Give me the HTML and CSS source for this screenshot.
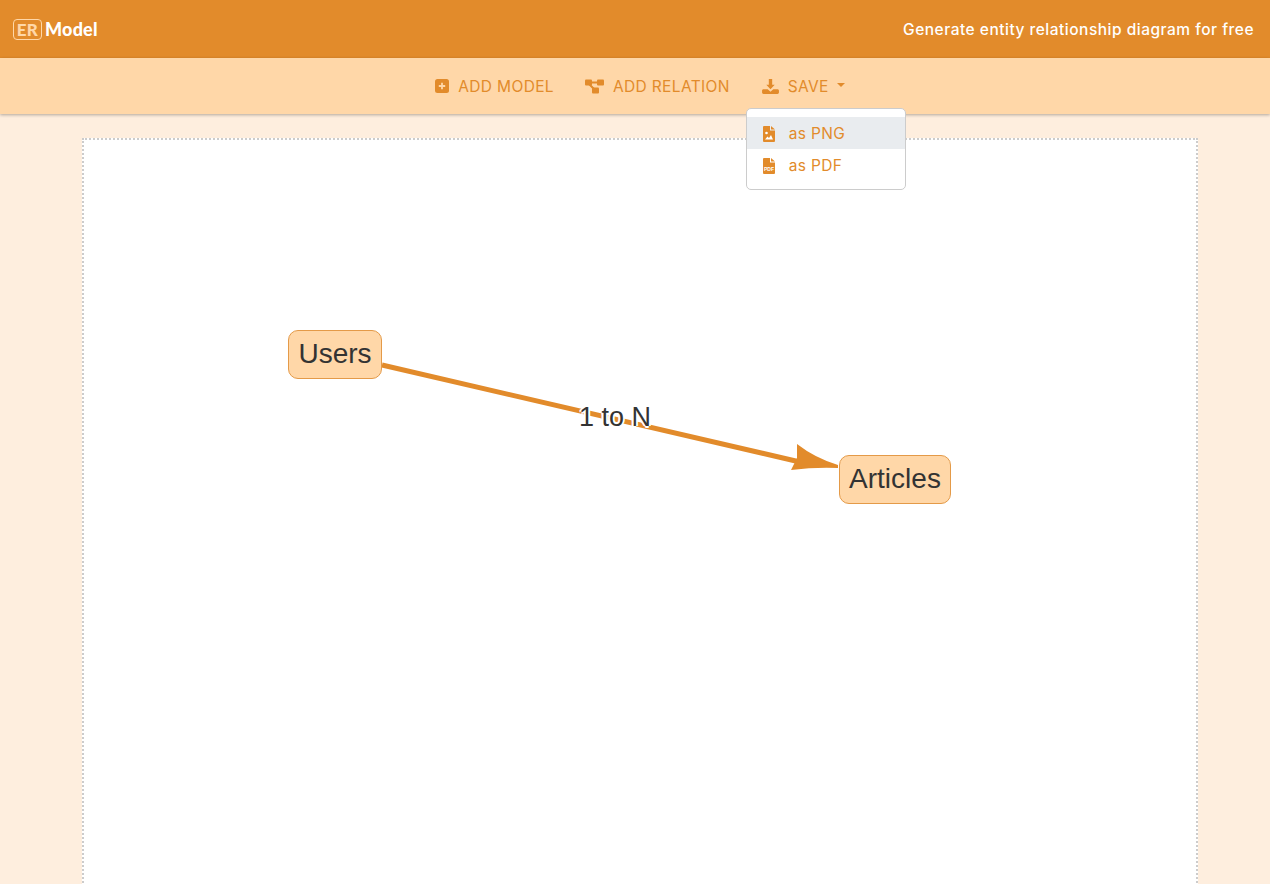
FILE: index.html
```html
<!DOCTYPE html>
<html lang="en">
<head>
<meta charset="utf-8">
<title>ERModel</title>
<link rel="stylesheet" href="styles.css">
</head>
<body>
<header class="topbar">
  <a class="brand"><span class="brand-er">ER</span><span class="brand-model">Model</span></a>
  <span class="tagline">Generate entity relationship diagram for free</span>
</header>
<nav class="toolbar">
  <a class="tool">
    <svg class="tool-icon" viewBox="0 0 14 14"><rect width="14" height="14" rx="2.5" fill="#e28b2b"/><path d="M7 3.8v6.4M3.8 7h6.4" stroke="#ffd7a8" stroke-width="1.8"/></svg>
    ADD MODEL
  </a>
  <a class="tool">
    <svg class="tool-icon wide" viewBox="0 0 19 15"><rect x="0" y="0.500" width="7" height="6" rx="1" fill="#e28b2b"/><rect x="12" y="0.500" width="7" height="6" rx="1" fill="#e28b2b"/><rect x="7" y="8.500" width="7" height="6" rx="1" fill="#e28b2b"/><path d="M6 3.500h7M4 5l5 5" stroke="#e28b2b" stroke-width="2" fill="none"/></svg>
    ADD RELATION
  </a>
  <div class="tool save">
    <svg class="tool-icon wide" viewBox="0 0 18 16"><path d="M7.200 0h3.600v6.200h2.700L9 11 4.500 6.200h2.700z" fill="#e28b2b"/><path d="M0 12.500C0 11.600.7 11 1.500 11H6l3 2.500L12 11h4.500c.8 0 1.500.6 1.500 1.500v2c0 .8-.7 1.500-1.500 1.500h-15C.7 16 0 15.300 0 14.500z" fill="#e28b2b"/></svg>
    SAVE
    <span class="caret"></span>
    <div class="menu">
      <a class="menu-item active">
        <svg class="file-icon" viewBox="0 0 12 16"><path d="M0 1a1 1 0 0 1 1-1h6v4.500h5V15a1 1 0 0 1-1 1H1a1 1 0 0 1-1-1z" fill="#e28b2b"/><path d="M8 0l4 3.500H8z" fill="#e28b2b"/><circle cx="3.500" cy="7" r="1.300" fill="#fff"/><path d="M2 13.500l2.500-3 1.500 1.500 2-3 2 4.500z" fill="#fff"/></svg>
        as PNG
      </a>
      <a class="menu-item">
        <svg class="file-icon" viewBox="0 0 12 16"><path d="M0 1a1 1 0 0 1 1-1h6v4.500h5V15a1 1 0 0 1-1 1H1a1 1 0 0 1-1-1z" fill="#e28b2b"/><path d="M8 0l4 3.500H8z" fill="#e28b2b"/><text x="6" y="12.500" class="pdf-label">PDF</text></svg>
        as PDF
      </a>
    </div>
  </div>
</nav>
<main class="canvas">
  <svg class="edge" width="1114" height="745" viewBox="0 0 1114 745">
    <line x1="298" y1="225" x2="716" y2="322" class="edge-line"/>
    <path d="M713 304 Q731 318 754 325 L754 328 Q731 327 707 330 L713 318 Z" class="edge-head"/>
  </svg>
  <div class="node node-users">Users</div>
  <div class="node node-articles">Articles</div>
  <div class="edge-label">1 to N</div>
</main>
</body>
</html>
```

FILE: styles.css
```css
* { box-sizing: border-box; }
html, body { margin: 0; height: 100%; overflow: hidden; }
body {
  background: #feeede;
  font-family: "Inter", "Noto Sans", sans-serif;
  color: #e28b2b;
}
.topbar {
  height: 58px;
  background: #e28b2b;
  display: flex;
  align-items: center;
  justify-content: space-between;
  padding: 0 16px 0 13px;
}
.brand { display: flex; align-items: center; font-family: "Lato", sans-serif; font-weight: 900; font-size: 18px; letter-spacing: .2px; }
.brand-er {
  color: #ffd7a8;
  border: 1px solid #ffd7a8;
  border-radius: 4px;
  width: 29px;
  height: 21px;
  line-height: 19px;
  text-align: center;
  font-size: 17px;
  letter-spacing: .3px;
}
.brand-model { color: #fff; margin-left: 3px; }
.tagline { color: #fff; font-size: 15.500px; font-weight: 500; letter-spacing: .5px; }
.toolbar {
  height: 56px;
  background: #ffd7a8;
  box-shadow: 0 1px 3px rgba(0,0,0,.3);
  display: flex;
  align-items: center;
  justify-content: center;
  gap: 31px;
  padding-left: 10px;
  position: relative;
  z-index: 2;
  font-size: 15.500px;
  letter-spacing: .35px;
}
.tool { display: flex; align-items: center; gap: 9px; position: relative; }
.save { gap: 8px; }
.tool-icon { width: 14px; height: 14px; }
.tool-icon.wide { width: 19px; height: 15px; }
.caret {
  width: 0; height: 0;
  border-left: 4px solid transparent;
  border-right: 4px solid transparent;
  border-top: 4px solid #e28b2b;
  margin: -2px 0 0 0;
}
.menu {
  position: absolute;
  top: 31px;
  left: -15px;
  width: 160px;
  height: 82px;
  padding: 8px 0;
  background: #fff;
  border: 1px solid #ccc;
  border-radius: 5px;
}
.menu-item { height: 32px; display: flex; align-items: center; gap: 14px; padding: 2px 0 0 16px; }
.menu-item.active { background: #e9ecef; }
.file-icon { width: 12px; height: 16px; }
.pdf-label { fill: #fff; font-family: "Liberation Sans", Arial, sans-serif; font-size: 5px; font-weight: 700; text-anchor: middle; letter-spacing: 0; }
.canvas {
  position: relative;
  width: 1116px;
  height: 760px;
  margin: 24px 0 0 82px;
  background: #fff;
  border: 2px dotted #ccc;
}
.edge { position: absolute; left: 0; top: 0; }
.edge-line { stroke: #e28b2b; stroke-width: 5px; }
.edge-head { fill: #e28b2b; }
.node {
  position: absolute;
  background: #ffd7a8;
  border: 1px solid #e49a48;
  border-radius: 10px;
  height: 49px;
  line-height: 45px;
  text-align: center;
  font-family: "Liberation Sans", Arial, sans-serif;
  font-size: 28px;
  color: #333;
}
.node-users { left: 204px; top: 190px; width: 94px; }
.node-articles { left: 755px; top: 315px; width: 112px; }
.edge-label {
  position: absolute;
  left: 495px;
  top: 262px;
  font-family: "Liberation Sans", Arial, sans-serif;
  font-size: 27px;
  color: #333;
  text-shadow: 2px 0 0 #fff, -2px 0 0 #fff, 0 2px 0 #fff, 0 -2px 0 #fff;
}
```
